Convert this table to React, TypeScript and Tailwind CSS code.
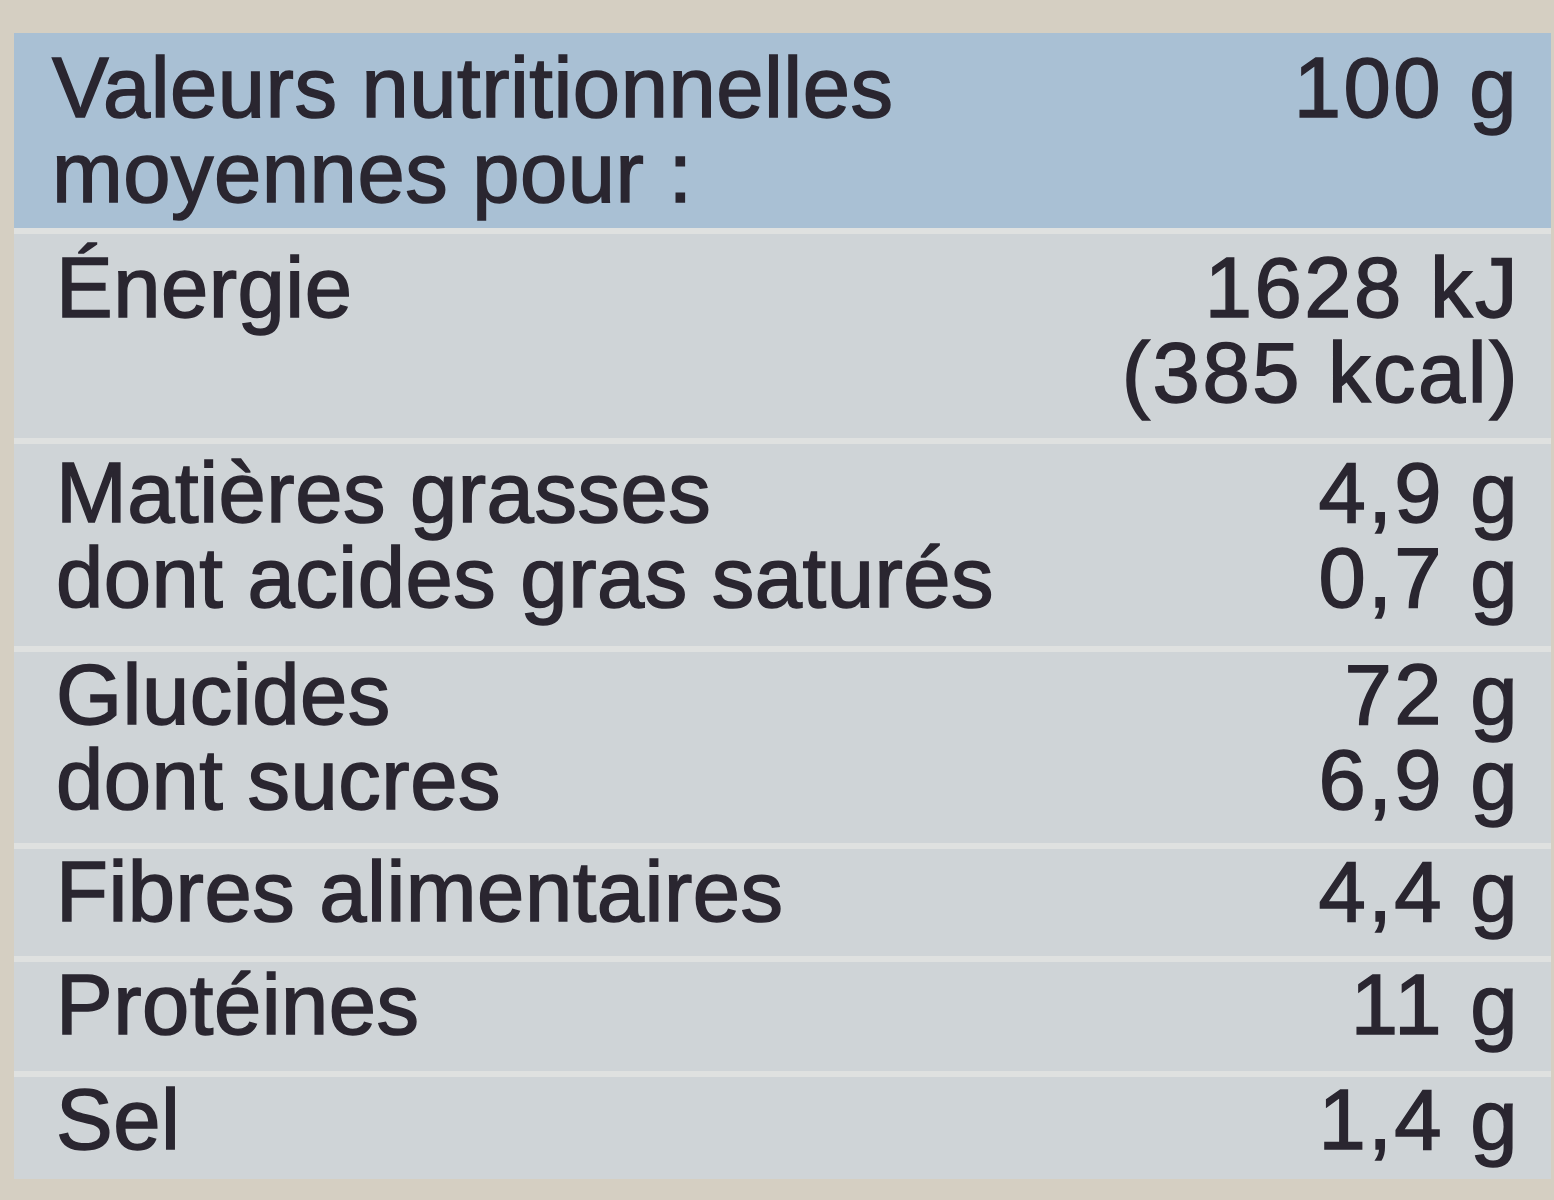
type Row = {
  labels: string[];
  values: string[];
  pad: string;
};

const rows: Row[] = [
  { labels: ['Énergie'], values: ['1628 kJ', '(385 kcal)'], pad: 'pt-[11px] pb-[23px]' },
  { labels: ['Matières grasses', 'dont acides gras saturés'], values: ['4,9 g', '0,7 g'], pad: 'pt-[6px] pb-[26px]' },
  { labels: ['Glucides', 'dont sucres'], values: ['72 g', '6,9 g'], pad: 'pt-[0px] pb-[21px]' },
  { labels: ['Fibres alimentaires'], values: ['4,4 g'], pad: 'pt-[0px] pb-[22px]' },
  { labels: ['Protéines'], values: ['11 g'], pad: 'pt-[0px] pb-[24px]' },
  { labels: ['Sel'], values: ['1,4 g'], pad: 'pt-[0px] pb-[17px]' },
];

export default function App() {
  return (
    <div className="w-[1554px] h-[1200px] bg-[#d5cfc2] pt-[33px] pl-[14px] pr-[3px] pb-[20px] font-['Liberation_Sans',Arial,sans-serif] text-[#2a2630] text-[85px] leading-[85px] tracking-[0.5px] [-webkit-text-stroke:1.5px_#2a2630]">
      <div className="flex flex-col gap-[6px] bg-[#dfe1e0]">
        {/* header */}
        <div className="flex justify-between bg-[#a9c0d4] pl-[38px] pr-[32px] pt-[12px] pb-[13px]">
          <div>
            <div>Valeurs nutritionnelles</div>
            <div>moyennes pour :</div>
          </div>
          <div className="tracking-[2.5px]">100 g</div>
        </div>

        {rows.map((row) => (
          <div
            key={row.labels[0]}
            className={`flex justify-between bg-[#cfd4d7] pl-[42px] pr-[31px] ${row.pad}`}
          >
            <div>
              {row.labels.map((l) => (
                <div key={l}>{l}</div>
              ))}
            </div>
            <div className="text-right tracking-[2.5px]">
              {row.values.map((v) => (
                <div key={v}>{v}</div>
              ))}
            </div>
          </div>
        ))}
      </div>
    </div>
  );
}
